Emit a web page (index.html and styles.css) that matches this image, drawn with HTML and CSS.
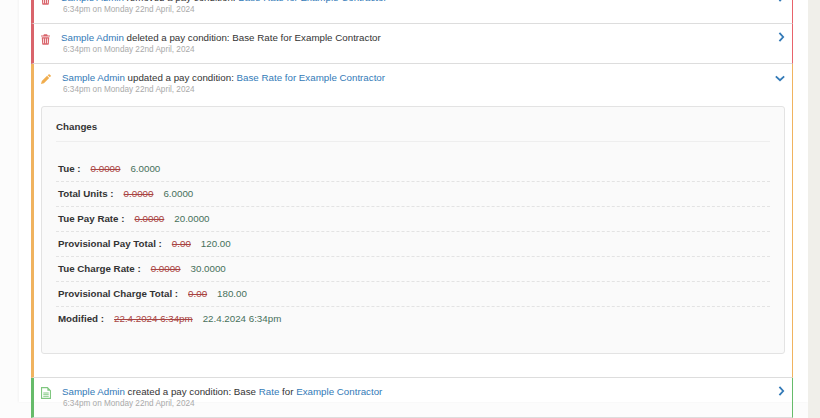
FILE: index.html
```html
<!DOCTYPE html>
<html lang="en">
<head>
<meta charset="utf-8">
<title>Activity</title>
<link rel="stylesheet" href="styles.css">
</head>
<body>
<div class="page">
<div class="sheet">
<ul class="feed">
  <li class="item danger">
    <div class="head">
      <svg class="icon" viewBox="0 0 12 14"><path fill="#d9646b" d="M4 0h4l1 1.500h3V3H0V1.500h3zM1 4h10l-.6 9a1 1 0 0 1-1 1H2.600a1 1 0 0 1-1-1zm2 1.500v6.500h1V5.500zm2.500 0v6.500h1V5.500zm2.500 0v6.500h1V5.500z"/></svg>
      <div class="text">
        <div class="line"><a>Sample Admin</a> removed a pay condition: <a>Base Rate for Example Contractor</a></div>
        <div class="time">6:34pm on Monday 22nd April, 2024</div>
      </div>
      <svg class="chev" viewBox="0 0 8 12"><path d="M1.500 1l4.500 5-4.500 5" fill="none" stroke="#337ab7" stroke-width="2.200"/></svg>
    </div>
  </li>
  <li class="item danger">
    <div class="head">
      <svg class="icon" viewBox="0 0 12 14"><path fill="#d9646b" d="M4 0h4l1 1.500h3V3H0V1.500h3zM1 4h10l-.6 9a1 1 0 0 1-1 1H2.600a1 1 0 0 1-1-1zm2 1.500v6.500h1V5.500zm2.500 0v6.500h1V5.500zm2.500 0v6.500h1V5.500z"/></svg>
      <div class="text">
        <div class="line"><a>Sample Admin</a> deleted a pay condition: Base Rate for Example Contractor</div>
        <div class="time">6:34pm on Monday 22nd April, 2024</div>
      </div>
      <svg class="chev" viewBox="0 0 8 12"><path d="M1.500 1l4.500 5-4.500 5" fill="none" stroke="#337ab7" stroke-width="2.200"/></svg>
    </div>
  </li>
  <li class="item warning">
    <div class="head">
      <svg class="icon wide" viewBox="0 0 12 12"><path fill="#f0ad4e" d="M9 .5a1 1 0 0 1 1.400 0l1.100 1.100a1 1 0 0 1 0 1.400l-1 1L8 1.500zM7.300 2.200l2.500 2.500L3.500 11 0 12l1-3.500z"/></svg>
      <div class="text shifted">
        <div class="line"><a>Sample Admin</a> updated a pay condition: <a>Base Rate for Example Contractor</a></div>
        <div class="time">6:34pm on Monday 22nd April, 2024</div>
      </div>
      <svg class="chev down" viewBox="0 0 12 8"><path d="M1 1.500l5 4.500 5-4.500" fill="none" stroke="#337ab7" stroke-width="2.200"/></svg>
    </div>
    <div class="panel">
      <h4 class="panel-title">Changes</h4>
      <div class="rows">
        <div class="row"><b>Tue :</b><s>0.0000</s><span class="new">6.0000</span></div>
        <div class="row"><b>Total Units :</b><s>0.0000</s><span class="new">6.0000</span></div>
        <div class="row"><b>Tue Pay Rate :</b><s>0.0000</s><span class="new">20.0000</span></div>
        <div class="row"><b>Provisional Pay Total :</b><s>0.00</s><span class="new">120.00</span></div>
        <div class="row"><b>Tue Charge Rate :</b><s>0.0000</s><span class="new">30.0000</span></div>
        <div class="row"><b>Provisional Charge Total :</b><s>0.00</s><span class="new">180.00</span></div>
        <div class="row"><b>Modified :</b><s>22.4.2024 6:34pm</s><span class="new">22.4.2024 6:34pm</span></div>
      </div>
    </div>
  </li>
  <li class="item success">
    <div class="head">
      <svg class="icon wide" viewBox="0 0 11 13"><path fill="none" stroke="#7fc77f" stroke-width="1.200" d="M.6.6h6.500l3.300 3.300v8.500H.6z"/><path fill="#7fc77f" d="M7 .6l3.400 3.400H7zM2.500 6h6v1h-6zM2.500 8h6v1h-6zM2.500 10h6v1h-6z"/></svg>
      <div class="text shifted">
        <div class="line"><a>Sample Admin</a> created a pay condition: Base <a>Rate</a> for <a>Example Contractor</a></div>
        <div class="time">6:34pm on Monday 22nd April, 2024</div>
      </div>
      <svg class="chev" viewBox="0 0 8 12"><path d="M1.500 1l4.500 5-4.500 5" fill="none" stroke="#337ab7" stroke-width="2.200"/></svg>
    </div>
  </li>
</ul>
</div>
</div>
</body>
</html>
```
FILE: styles.css
```css
* { box-sizing: border-box; }
html, body { margin: 0; padding: 0; height: 100%; }
body {
  background: #f0efea;
  font-family: "Liberation Sans", Arial, sans-serif;
  font-size: 9.75px;
  color: #333;
  overflow: hidden;
}
.page { width: 808px; height: 418px; overflow: hidden; padding: 0 0 0 19px; background: #fcfcfc; }
.sheet { background: #fff; height: 100%; padding: 0 15px 0 12px; box-shadow: -1px 0 2px rgba(0,0,0,.04); }
.feed { list-style: none; margin: -16px 0 0; padding: 0; }
.item {
  border-left: 3px solid #d9646b;
  border-right: 1px solid #e8636a;
  border-bottom: 1px solid #ddd;
}
.danger { border-left-color: #d9646b; border-right-color: #e8636a; }
.warning { border-left-color: #f0b35f; border-right-color: #f0b35f; padding-bottom: 23px; }
.success { border-left-color: #66bb6a; border-right-color: #66bb6a; }
.head { display: flex; align-items: flex-start; height: 39px; padding: 8px 7px 0 7px; }
.icon { width: 9px; height: 11px; margin: 2px 11px 0 0; flex: none; }
.icon.wide { width: 10px; height: 12px; margin: 1px 11px 0 0; }
.text { flex: 1; }
.line { line-height: 11px; height: 12px; white-space: nowrap; }
a { color: #337ab7; }
.time { font-size: 8.2px; line-height: 11px; color: #aaa; padding-left: 2px; }
.shifted .time { padding-left: 1px; }
.chev { width: 7px; height: 10px; flex: none; }
.chev.down { width: 10px; height: 7px; margin: 3px 0 0 -1px; }
.panel {
  margin: 3px 7px 0 7px;
  height: 248px;
  background: #fafafa;
  border: 1px solid #e3e3e3;
  border-radius: 3px;
  padding: 0 14px;
}
.panel-title {
  margin: 0;
  height: 35px;
  padding: 14px 0 0;
  font-size: 9.75px;
  line-height: 12px;
  font-weight: 700;
  color: #333;
  border-bottom: 1px solid #eee;
}
.rows { padding-top: 15px; }
.row {
  height: 25px;
  padding: 5px 2px 0;
  line-height: 14px;
  border-bottom: 1px dashed #e3e3e3;
  white-space: nowrap;
}
.row:last-child { border-bottom: 0; }
.row b { font-weight: 700; margin-right: 10px; }
.row s { color: #a94442; margin-right: 10px; }
.new { color: #47705a; }
```
